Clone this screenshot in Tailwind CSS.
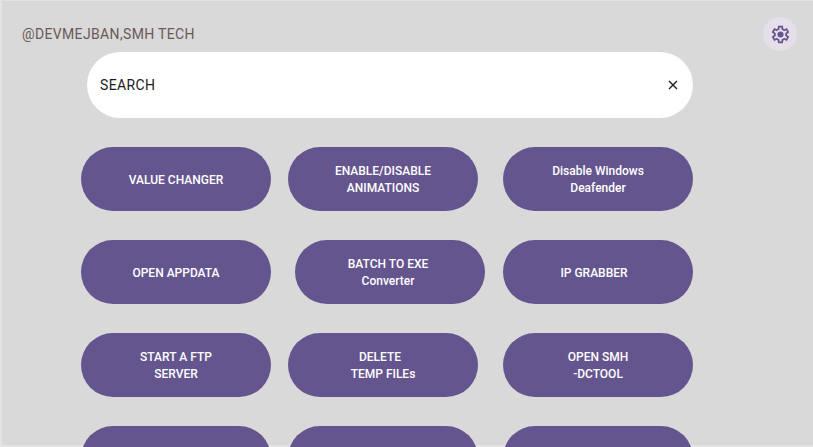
<!DOCTYPE html>
<html lang="en">
<head>
<meta charset="utf-8">
<meta name="viewport" content="width=device-width, initial-scale=1">
<title>SMH Tech tools</title>
<script src="https://cdn.jsdelivr.net/npm/@tailwindcss/browser@4"></script>
</head>
<body class="h-screen overflow-hidden bg-[#d9d9d9]">
<div class="h-screen border-t border-b-2 border-l-2 border-[#e3e3e3] bg-[#d9d9d9] font-['Roboto',sans-serif]">
  <header class="flex h-[50px] items-end justify-between pr-4 pl-5">
    <p class="pb-[7px] text-sm leading-5 tracking-wide text-[#6b5858]">@DEVMEJBAN,SMH TECH</p>
    <button type="button" aria-label="Settings" class="flex size-[34px] items-center justify-center rounded-full bg-[#e5dfea]">
      <svg class="size-[21px]" viewBox="0 0 24 24" fill="#65558f" aria-hidden="true"><path fill-rule="evenodd" d="M9.25 22l-.4-3.2q-.33-.13-.61-.3-.29-.18-.56-.38L4.7 19.38l-2.75-4.75 2.58-1.95q-.03-.18-.03-.34v-.68q0-.16.03-.34L1.95 9.38 4.7 4.63l2.98 1.25q.27-.2.57-.38t.6-.3l.4-3.2h5.5l.4 3.2q.33.13.61.3.29.18.56.38l2.98-1.25 2.75 4.75-2.58 1.95q.03.18.03.34v.68q0 .16-.05.34l2.57 1.95-2.75 4.75-2.95-1.26q-.27.2-.57.38t-.6.3l-.4 3.2zM11 20h1.98l.35-2.65q.77-.2 1.43-.59.67-.38 1.22-.93l2.47 1.02.98-1.7-2.15-1.62q.12-.35.17-.74.05-.38.05-.79t-.05-.79q-.05-.38-.17-.74l2.15-1.62-.98-1.7-2.47 1.05q-.55-.58-1.22-.96-.66-.39-1.43-.59L13 4h-1.98l-.35 2.65q-.77.2-1.43.59-.67.38-1.22.93L5.55 7.15l-.98 1.7 2.15 1.6q-.12.38-.17.75-.05.38-.05.8 0 .4.05.78.05.37.17.75l-2.15 1.62.98 1.7 2.47-1.05q.55.58 1.22.96.66.39 1.43.59z"/><circle cx="12" cy="12" r="3.5"/></svg>
    </button>
  </header>
  <main class="pt-px pr-[120px] pl-[79px]">
    <form role="search" class="ml-[6px] flex h-[66px] items-center rounded-full bg-white px-[13px]">
      <input type="text" aria-label="Search" placeholder="SEARCH" class="min-w-0 flex-1 bg-transparent text-sm tracking-wide text-[#1d1b20] outline-none placeholder:text-[#1d1b20] placeholder:opacity-100">
      <button type="reset" aria-label="Clear" class="flex size-[14px] items-center justify-center">
        <svg class="size-[14px]" viewBox="0 0 14 14" fill="none" stroke="#1d1b20" stroke-width="1.4" aria-hidden="true"><path d="M3 3l8 8M11 3l-8 8"/></svg>
      </button>
    </form>
    <div class="mt-[29px] grid auto-rows-[64px] grid-cols-[207fr_215fr_190fr] gap-y-[29px] text-center text-xs leading-[17px] font-medium text-white">
      <button type="button" class="mr-[17px] rounded-full bg-[#65558f] pt-0.5">VALUE CHANGER</button>
      <button type="button" class="mr-[25px] rounded-full bg-[#65558f] pt-0.5">ENABLE/DISABLE<br>ANIMATIONS</button>
      <button type="button" class="rounded-full bg-[#65558f] pt-0.5">Disable Windows<br>Deafender</button>
      <button type="button" class="mr-[17px] rounded-full bg-[#65558f] pt-0.5">OPEN APPDATA</button>
      <button type="button" class="mr-[18px] ml-[7px] rounded-full bg-[#65558f] pt-0.5 pr-1">BATCH TO EXE<br>Converter</button>
      <button type="button" class="rounded-full bg-[#65558f] pt-0.5 pr-2">IP GRABBER</button>
      <button type="button" class="mr-[17px] rounded-full bg-[#65558f] pt-0.5">START A FTP<br>SERVER</button>
      <button type="button" class="mr-[25px] rounded-full bg-[#65558f] pt-0.5">DELETE&nbsp;&nbsp;<br>TEMP FILEs</button>
      <button type="button" class="rounded-full bg-[#65558f] pt-0.5">OPEN SMH<br>-DCTOOL</button>
      <button type="button" aria-label="Tool 10" class="mr-[17px] rounded-full bg-[#65558f]"></button>
      <button type="button" aria-label="Tool 11" class="mr-[25px] rounded-full bg-[#65558f]"></button>
      <button type="button" aria-label="Tool 12" class="rounded-full bg-[#65558f]"></button>
    </div>
  </main>
</div>
</body>
</html>
